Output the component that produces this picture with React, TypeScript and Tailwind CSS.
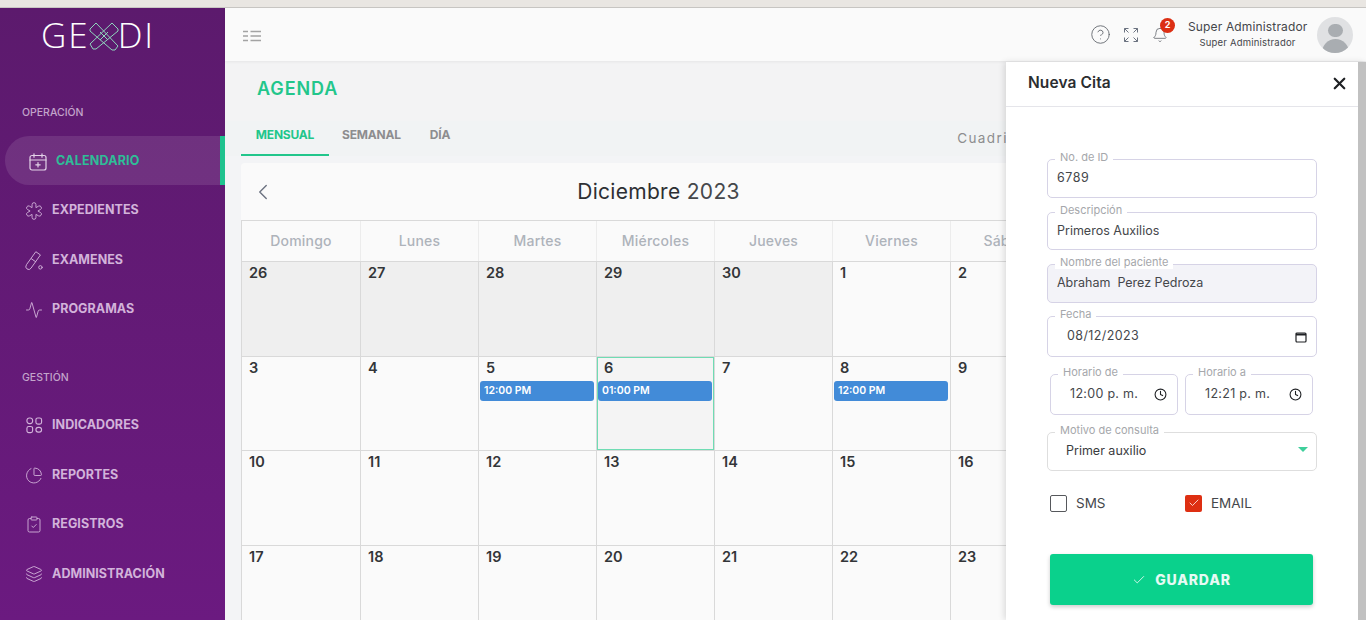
import { Activity, Bell, Check, ChevronLeft, CircleHelp, ClipboardCheck, Clock, Layers, PieChart, X } from "lucide-react";
import type { ReactNode } from "react";

const font = { fontFamily: "Inter, 'Noto Sans', sans-serif" };

function Logo() {
  return (
    <div className="flex items-center pl-[41px] h-[55px] text-white text-[35px] font-light tracking-[2px]" style={{ fontFamily: "'Open Sans', sans-serif" }}>
      <span>GE</span>
      <svg viewBox="0 0 30 30" className="w-[30px] h-[30px] -mx-[1px] text-[#8fd6bd]" fill="none" stroke="currentColor" strokeWidth="1">
        <path d="M1 8l6-6 22 23-3 4-3 0L1 10z" />
        <path d="M29 8l-6-6L1 23l3 5 3 0L29 10z" />
        <path d="M11 11l8 8M19 11l-8 8" />
      </svg>
      <span>DI</span>
    </div>
  );
}

function CalendarIcon() {
  return (
    <svg viewBox="0 0 18 18" className="w-[18px] h-[18px]" fill="none" stroke="currentColor" strokeWidth="1.2" strokeLinecap="round">
      <rect x="1" y="2.500" width="16" height="14.500" rx="2" />
      <path d="M1 7h16M5 0.800v3.400M13 0.800v3.400M9 9.500v4.500M6.800 11.800h4.400" />
    </svg>
  );
}

function FlowerIcon() {
  return (
    <svg viewBox="0 0 24 24" className="w-[20px] h-[20px]" fill="none" stroke="currentColor" strokeWidth="1.200" strokeLinejoin="round">
      <path d="M9.400 3.500A2.600 2.600 0 0 1 14.600 3.500L14.600 7.500 18.060 5.500A2.600 2.600 0 0 1 20.660 10L17.200 12 20.660 14A2.600 2.600 0 0 1 18.060 18.500L14.600 16.500 14.600 20.500A2.600 2.600 0 0 1 9.400 20.500L9.400 16.500 5.940 18.500A2.600 2.600 0 0 1 3.340 14L6.800 12 3.340 10A2.600 2.600 0 0 1 5.940 5.500L9.400 7.500Z" />
    </svg>
  );
}

function TubeIcon() {
  return (
    <svg viewBox="2 0.500 21 22" className="w-[20px] h-[21px]" fill="none" stroke="currentColor" strokeWidth="1.100" strokeLinecap="round" strokeLinejoin="round">
      <path d="M15 1.500l5 3.500L9 20.500a3.200 3.200 0 0 1-5.500-3.800z" />
      <path d="M9.500 9.500l5 3.500" />
      <circle cx="20" cy="19.500" r="2" />
    </svg>
  );
}

function GridIcon() {
  return (
    <svg viewBox="0 0 18 18" className="w-[17px] h-[17px]" fill="none" stroke="currentColor" strokeWidth="1.200">
      <rect x="1" y="1" width="6" height="6" rx="2.500" />
      <rect x="10.500" y="1" width="6" height="6.500" rx="2" />
      <rect x="1" y="10" width="6" height="6.500" rx="2" />
      <rect x="10.500" y="11" width="6" height="5" rx="2.500" />
    </svg>
  );
}

function ExpandIcon() {
  return (
    <svg viewBox="0 0 16 16" className="w-[16px] h-[16px]" fill="none" stroke="#6b7280" strokeWidth="1">
      <path d="M1.500 5.500v-4h4M1.500 1.500l4 4M10.500 1.500h4v4M14.500 1.500l-4 4M1.500 10.500v4h4M1.500 14.500l4-4M14.500 10.500v4h-4M14.500 14.500l-4-4" />
    </svg>
  );
}

function MenuIcon() {
  return (
    <svg viewBox="0 0 18 12" className="w-[18px] h-[12px] mt-[2px]" fill="none" stroke="#a3a3a3" strokeWidth="1.300">
      <path d="M0 1.500h5M0 6h5M0 10.500h5M7.500 1.500H18M7.500 6H18M7.500 10.500H18" />
    </svg>
  );
}

function NavItem({ icon, label, active }: { icon: ReactNode; label: string; active?: boolean }) {
  if (active) {
    return (
      <div className="flex items-center h-[49px] ml-[5px] pl-[24px] pt-[2px] gap-[9px] rounded-l-full bg-white/10 border-r-[5px] border-[#1fc28e] text-[#e3d3e8]">
        {icon}
        <span className="text-[12.500px] font-bold tracking-[0.2px] text-[#2fbd97]">{label}</span>
      </div>
    );
  }
  return (
    <div className="flex items-center h-[49.500px] pl-[25px] pt-[2px] gap-[9px] text-[#d2b3da]">
      <span className="w-[18px] flex justify-center">{icon}</span>
      <span className="text-[12.500px] font-bold tracking-[0.05px]">{label}</span>
    </div>
  );
}

function Sidebar() {
  return (
    <aside className="w-[225px] shrink-0 h-full bg-gradient-to-b from-[#5c1a6d] to-[#6b1a80] flex flex-col">
      <Logo />
      <div className="text-[10.500px] font-medium text-[#c3a5cb] pl-[22px] mt-[43px] mb-[17px] leading-[13px]">OPERACIÓN</div>
      <NavItem active label="CALENDARIO" icon={<CalendarIcon />} />
      <NavItem label="EXPEDIENTES" icon={<FlowerIcon />} />
      <NavItem label="EXAMENES" icon={<TubeIcon />} />
      <NavItem label="PROGRAMAS" icon={<Activity size={20} strokeWidth={1.2} />} />
      <div className="text-[10.500px] font-medium text-[#c3a5cb] pl-[22px] mt-[37px] mb-[16.400px] leading-[13px]">GESTIÓN</div>
      <NavItem label="INDICADORES" icon={<GridIcon />} />
      <NavItem label="REPORTES" icon={<PieChart size={21} strokeWidth={1.2} />} />
      <NavItem label="REGISTROS" icon={<ClipboardCheck size={21} strokeWidth={1.2} />} />
      <NavItem label="ADMINISTRACIÓN" icon={<Layers size={20} strokeWidth={1.2} />} />
    </aside>
  );
}

function TopBar() {
  return (
    <header className="h-[53px] shrink-0 bg-[#fafafa] flex items-center pl-[18px] pr-[13px] shadow-[0_1px_3px_rgba(0,0,0,0.06)] relative z-10">
      <MenuIcon />
      <div className="ml-auto flex items-center">
        <CircleHelp size={21} strokeWidth={1} className="text-[#5f636a]" />
        <span className="ml-[12px]"><ExpandIcon /></span>
        <span className="relative ml-[13px] text-[#5f636a]">
          <Bell size={16} strokeWidth={1.2} />
          <span className="absolute -top-[9px] left-[8px] w-[15px] h-[15px] rounded-full bg-[#dc2f14] text-white text-[9px] font-bold flex items-center justify-center">2</span>
        </span>
        <div className="ml-[20px] w-[119px] text-center text-[#44464a] whitespace-nowrap">
          <div className="text-[12px] tracking-[0.15px] leading-[16px]">Super Administrador</div>
          <div className="text-[9.500px] tracking-[0.2px] leading-[14px] mt-[1px]">Super Administrador</div>
        </div>
        <div className="ml-[10px] w-[36px] h-[36px] rounded-full bg-[#e0e1e3] overflow-hidden flex flex-col items-center">
          <div className="w-[15px] h-[15px] rounded-full bg-[#a9adb1] mt-[7px]" />
          <div className="w-[27px] h-[14px] rounded-t-full bg-[#a9adb1] mt-[2px]" />
        </div>
      </div>
    </header>
  );
}

const weekDays = ["Domingo", "Lunes", "Martes", "Miércoles", "Jueves", "Viernes", "Sábado"];

const weeks = [
  [26, 27, 28, 29, 30, 1, 2],
  [3, 4, 5, 6, 7, 8, 9],
  [10, 11, 12, 13, 14, 15, 16],
  [17, 18, 19, 20, 21, 22, 23],
];

const events: Record<number, string> = { 5: "12:00 PM", 6: "01:00 PM", 8: "12:00 PM" };

function Calendar() {
  return (
    <div className="w-[828px] shrink-0 ml-[16px]">
      <div className="h-[57px] bg-[#fafafa] rounded-t-[4px] flex items-center pl-[9px]">
        <ChevronLeft size={26} strokeWidth={1.3} className="text-[#6b7280]" />
        <div className="w-[743px] text-center text-[#2d2f33] text-[21px] ml-[11px] tracking-[0.3px]">
          Diciembre <span className="text-[#45474b]">2023</span>
        </div>
      </div>
      <div className="grid grid-cols-[119px_repeat(6,118px)] border-l border-t border-[#d9d9d9] bg-[#fafafa]">
        {weekDays.map((d) => (
          <div key={d} className="h-[40px] pb-[1px] border-r border-[#ececec] flex items-center justify-center text-[14px] font-medium tracking-[0.2px] text-[#aeb3ba]">
            {d}
          </div>
        ))}
        {weeks.map((week, w) =>
          week.map((day, i) => {
            const isMuted = w === 0 && i < 5;
            const isToday = w === 1 && day === 6;
            return (
              <div
                key={`${w}-${day}`}
                className={`h-[94.500px] border-r border-t border-[#d9d9d9] text-[14.500px] font-semibold text-[#333538] leading-[20px] pt-[1px] ${isMuted ? "bg-[#efefef]" : "bg-[#fafafa]"} ${isToday ? "!bg-[#f4f4f4] shadow-[inset_0_0_0_1px_#6fdcb3]" : ""}`}
              >
                <div className="pl-[7px]">{day}</div>
                {w === 1 && events[day] && (
                  <div className="ml-[1px] mr-[2px] mt-[3px] h-[20px] rounded-[3px] bg-[#428bd8] text-white text-[10.500px] font-semibold pl-[4px] flex items-center">
                    {events[day]}
                  </div>
                )}
              </div>
            );
          })
        )}
      </div>
    </div>
  );
}

function Field({ label, children, className = "", muted }: { label: string; children: ReactNode; className?: string; muted?: boolean }) {
  return (
    <div className={`relative border border-[#d6d3e6] rounded-[5px] flex items-center text-[12.500px] text-[#45474b] ${muted ? "bg-[#f3f3f8]" : "bg-white"} ${className}`}>
      <span className="absolute -top-[9px] left-[7px] bg-white px-[5px] text-[11px] leading-[13px] text-[#a5a7ab]">{label}</span>
      {children}
    </div>
  );
}

function DatePanel() {
  return (
    <div className="absolute top-[62px] right-0 bottom-0 w-[360px] bg-white shadow-[-2px_0_6px_rgba(0,0,0,0.12)] z-20 flex">
      <div className="flex-1 min-w-0">
        <div className="h-[45px] flex items-center justify-between pl-[22px] pr-[9px] pb-[2px] border-b border-[#e5e5ea]">
          <span className="text-[15.500px] font-semibold text-[#2b2d30] tracking-[0.1px]">Nueva Cita</span>
          <X size={19} strokeWidth={2.8} className="text-[#1f2124]" />
        </div>
        <div className="pl-[41px] pr-[41px] pt-[52px] flex flex-col">
          <Field label="No. de ID" className="h-[39px] pl-[9px]"><span className="tracking-[0.5px]">6789</span></Field>
          <Field label="Descripción" className="h-[38px] pl-[9px] mt-[14px]">Primeros Auxilios</Field>
          <Field label="Nombre del paciente" muted className="h-[39px] pl-[9px] mt-[14px]">Abraham&nbsp; Perez Pedroza</Field>
          <Field label="Fecha" className="h-[41px] pl-[19px] pr-[9px] mt-[13px] justify-between">
            <span className="tracking-[0.4px]">08/12/2023</span>
            <svg viewBox="0 0 12 12" className="w-[12px] h-[12px]" fill="none" stroke="#1f2124" strokeWidth="1.200"><rect x="1" y="2" width="10" height="9" rx="1" /><path d="M1 3.500h10" strokeWidth="2" /></svg>
          </Field>
          <div className="flex gap-[7px] pl-[3px] mt-[17px]">
            <Field label="Horario de" className="w-[128px] h-[41px] pl-[19px] justify-between pr-[10px]">
              <span className="tracking-[0.3px]">12:00 p. m.</span>
              <Clock size={13} strokeWidth={2} className="text-[#1f2124]" />
            </Field>
            <Field label="Horario a" className="w-[128px] h-[41px] pl-[19px] justify-between pr-[10px]">
              <span className="tracking-[0.3px]">12:21 p. m.</span>
              <Clock size={13} strokeWidth={2} className="text-[#1f2124]" />
            </Field>
          </div>
          <div className="mt-[17px]">
            <Field label="Motivo de consulta" className="h-[39px] pl-[18px] pr-[8px] justify-between !border-[#dedede]">
              <span className="text-[#3a3c40]">Primer auxilio</span>
              <span className="w-0 h-0 border-x-[5px] border-x-transparent border-t-[5px] border-t-[#3fcf9b] -mt-[4px]" />
            </Field>
          </div>
          <div className="flex items-center pl-[3px] mt-[22px] text-[13.500px] text-[#45474b]">
            <div className="w-[135px] flex items-center gap-[9px]">
              <span className="w-[17px] h-[17px] border border-[#56585c] rounded-[2px]" />
              SMS
            </div>
            <div className="flex items-center gap-[9px]">
              <span className="w-[17px] h-[17px] rounded-[2px] bg-[#de2f12] flex items-center justify-center text-white"><Check size={12} strokeWidth={1.5} /></span>
              EMAIL
            </div>
          </div>
          <button className="mt-[41px] ml-[3px] mr-[4px] h-[51px] rounded-[3px] bg-[#0ad18c] text-white/90 shadow-[0_2px_4px_rgba(0,0,0,0.2)] flex items-center justify-center gap-[9px] text-[14px] font-extrabold tracking-[0.8px]">
            <Check size={14} strokeWidth={1.5} />
            GUARDAR
          </button>
        </div>
      </div>
      <div className="w-[8px] bg-[#c1c1c1]" />
    </div>
  );
}

export default function App() {
  return (
    <div className="relative w-[1366px] h-[620px] overflow-hidden flex flex-col bg-[#f3f4f6]" style={font}>
      <div className="h-[8px] shrink-0 bg-[#e9e6e2] border-b border-[#c9c7c4]" />
      <div className="flex-1 min-h-0 flex">
        <Sidebar />
        <main className="flex-1 min-w-0 flex flex-col">
          <TopBar />
          <div className="h-[60px] shrink-0 flex items-center pl-[32px] pb-[6px] text-[18px] font-semibold tracking-[0.9px] text-[#22c68b] bg-[#f3f3f4]">AGENDA</div>
          <div className="h-[35px] shrink-0 flex items-start pl-[16px] text-[12px] font-bold tracking-[-0.2px] text-[#8d8d8f] bg-[#f1f3f4]">
            <div className="h-full w-[88px] flex justify-center pt-[5px] border-b-[2.500px] border-[#22c68b] text-[#22c68b]">MENSUAL</div>
            <div className="ml-[13px] pt-[5px]">SEMANAL</div>
            <div className="ml-[29px] pt-[5px]">DÍA</div>
            <div className="ml-[507px] pt-[7px] text-[13.500px] font-normal tracking-[1.400px] whitespace-nowrap">Cuadricula</div>
          </div>
          <div className="h-[7px] shrink-0" />
          <Calendar />
        </main>
      </div>
      <DatePanel />
    </div>
  );
}
